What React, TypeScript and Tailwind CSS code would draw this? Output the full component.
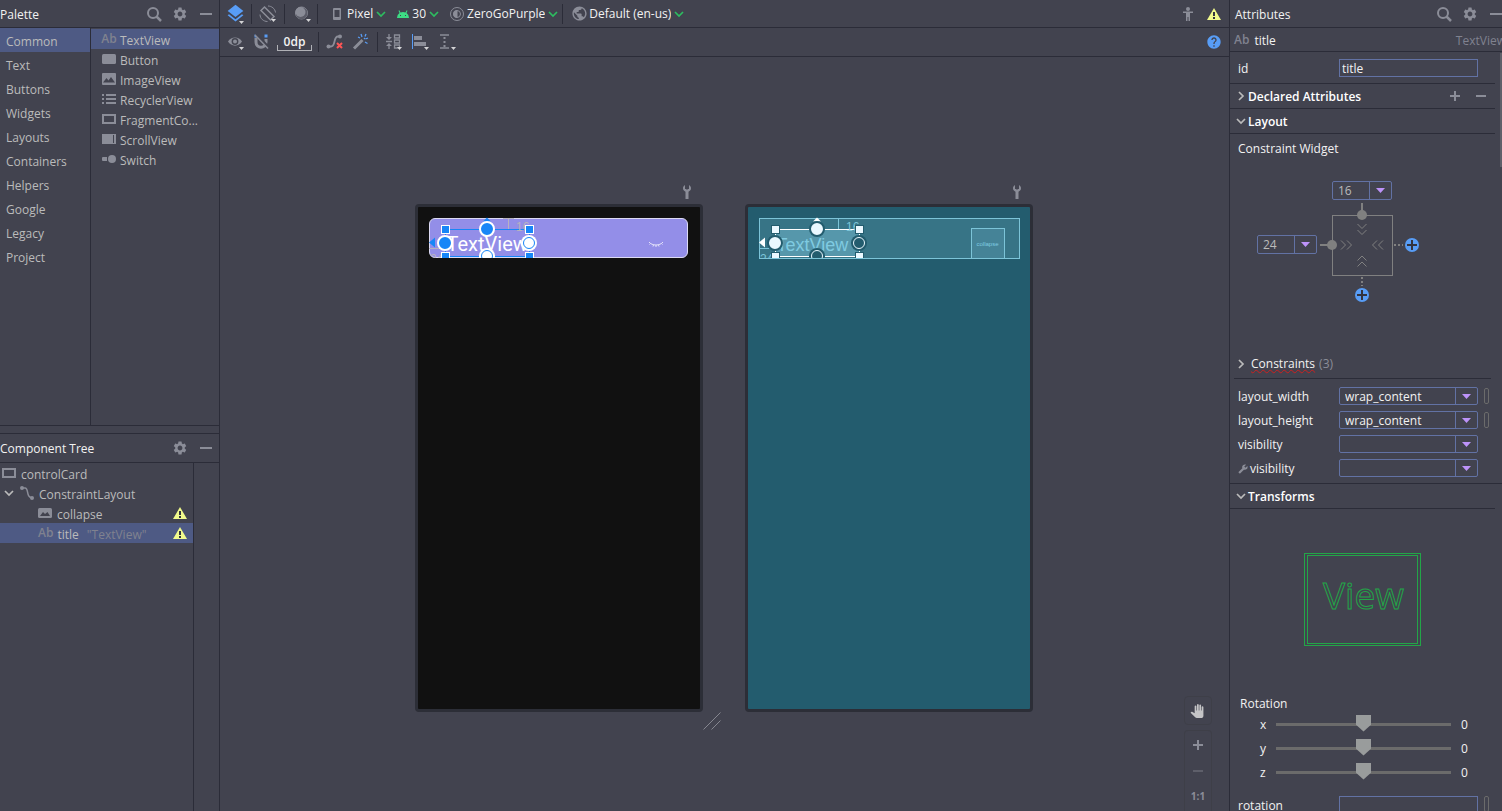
import type { ReactNode } from "react";
import clsx from "clsx";
import {
  MdBuild,
  MdHelp,
  MdLayers,
  MdPanTool,
  MdPublic,
  MdSettings,
} from "react-icons/md";

const categories = [
  "Common",
  "Text",
  "Buttons",
  "Widgets",
  "Layouts",
  "Containers",
  "Helpers",
  "Google",
  "Legacy",
  "Project",
];

const components = [
  { name: "TextView", icon: <AbIcon /> },
  { name: "Button", icon: <ButtonIcon /> },
  { name: "ImageView", icon: <ImageIcon /> },
  { name: "RecyclerView", icon: <ListIcon /> },
  { name: "FragmentCo...", icon: <FrameIcon /> },
  { name: "ScrollView", icon: <ScrollIcon /> },
  { name: "Switch", icon: <SwitchIcon /> },
];

/* ---------- icons ---------- */

function AbIcon() {
  return <span className="leading-4 font-semibold text-[#80828f]">Ab</span>;
}

function ButtonIcon() {
  return (
    <svg width="14" height="12" viewBox="0 0 14 12">
      <rect y="1" width="14" height="10" rx="1.5" fill="#8b8d98" />
    </svg>
  );
}

function ImageIcon() {
  return (
    <svg width="14" height="12" viewBox="0 0 14 12">
      <rect width="14" height="12" rx="1" fill="#8b8d98" />
      <path d="M1 9.5 4.5 5l2 2.5L9 4l4 5.500z" fill="#42434f" />
    </svg>
  );
}

function ListIcon() {
  return (
    <svg width="14" height="12" viewBox="0 0 14 12" fill="#8b8d98">
      <path d="M0 1h2v2H0zM4 1h10v2H4zM0 5h2v2H0zM4 5h10v2H4zM0 9h2v2H0zM4 9h10v2H4z" />
    </svg>
  );
}

function FrameIcon() {
  return (
    <svg width="14" height="12" viewBox="0 0 14 12" fill="none">
      <rect x="1" y="2" width="12" height="8" stroke="#8b8d98" strokeWidth="2" />
    </svg>
  );
}

function ScrollIcon() {
  return (
    <svg width="14" height="12" viewBox="0 0 14 12" fill="#8b8d98">
      <path d="M0 1h14v10H0z" />
      <path d="M11 2h2v8h-2z" fill="#42434f" />
      <path d="M12 2h1v8h-1z" />
    </svg>
  );
}

function SwitchIcon() {
  return (
    <svg width="14" height="12" viewBox="0 0 14 12" fill="#8b8d98">
      <path d="M1 4h4v4H1a1 1 0 0 1-1-1V5a1 1 0 0 1 1-1z" />
      <circle cx="10" cy="6" r="4" />
    </svg>
  );
}

function ConstraintIcon() {
  return (
    <svg width="14" height="14" viewBox="0 0 14 14" fill="none" stroke="#8b8d98">
      <path d="M2 2h3c4 0 1 9 6 9.500" strokeWidth="1.500" />
      <circle cx="2" cy="2" r="2" fill="#8b8d98" stroke="none" />
      <circle cx="12" cy="12" r="2" fill="#8b8d98" stroke="none" />
    </svg>
  );
}

function WarningIcon() {
  return (
    <svg width="14" height="12" viewBox="0 0 14 12">
      <path d="M7 0 14 12H0z" fill="#f1fa8c" />
      <path d="M6 4h2v4H6zM6 9h2v2H6z" fill="#33343f" />
    </svg>
  );
}

function SearchIcon() {
  return (
    <svg width="16" height="16" viewBox="0 0 16 16" fill="none" stroke="#8b8d98" strokeWidth="2">
      <circle cx="7" cy="7" r="5" />
      <path d="m10.500 10.500 4.500 4.500" strokeWidth="2.500" />
    </svg>
  );
}

function MinusIcon() {
  return (
    <svg width="12" height="12" viewBox="0 0 12 12">
      <path d="M0 5h12v2H0z" fill="#8b8d98" />
    </svg>
  );
}

function Chevron({ className, open = true }: { className?: string; open?: boolean }) {
  return (
    <svg
      width="10"
      height="10"
      viewBox="0 0 10 10"
      fill="none"
      stroke="currentColor"
      strokeWidth="1.700"
      className={clsx("shrink-0", className)}
    >
      <path d={open ? "M1 3l4 4 4-4" : "M3 1l4 4-4 4"} />
    </svg>
  );
}

function Wrench() {
  return (
    <svg width="8" height="14" viewBox="0 0 8 14">
      <path
        d="M2 0v4h1.200V4.500h1.600V4H6V0c1.300.800 2 2 2 3.300C8 5 7 6 5.500 6.800V14h-3V6.800C1 6 0 5 0 3.300 0 2 .7.800 2 0z"
        fill="#8b8d98"
      />
    </svg>
  );
}

// white corner mark on toolbar buttons that open a menu
const menuMark = <path d="M12 14h5l-2.500 3z" fill="#d4d4d6" />;

/* ---------- small parts ---------- */

function IconButton({ label, className, children }: { label: string; className?: string; children: ReactNode }) {
  return (
    <button type="button" aria-label={label} className={clsx("flex shrink-0 items-center justify-center", className)}>
      {children}
    </button>
  );
}

function ToolIcon({ label, children }: { label: string; children: ReactNode }) {
  return (
    <IconButton label={label} className="size-[18px]">
      <svg width="18" height="18" viewBox="0 0 18 18" fill="none">
        {children}
      </svg>
    </IconButton>
  );
}

function Divider() {
  return <span className="h-5 w-px shrink-0 bg-[#2b2c38]" />;
}

function ToolSelect({ label, value, icon }: { label: string; value: string; icon: ReactNode }) {
  return (
    <label className="flex items-center gap-[3px] text-[#f2f2f2]">
      {icon}
      <select aria-label={label} className="appearance-none field-sizing-content outline-none">
        <option>{value}</option>
      </select>
      <Chevron className="text-[#2dbd60]" />
    </label>
  );
}

function Combo({ id, label, value, className }: { id: string; label?: string; value: string; className?: string }) {
  return (
    <div className={clsx("flex rounded-xs border border-[#6272a4]", className)}>
      <select
        id={id}
        aria-label={label}
        className="min-w-0 flex-1 appearance-none pt-px pl-[5px] leading-4 outline-none"
      >
        <option>{value}</option>
      </select>
      <span className="pointer-events-none flex w-[22px] items-center justify-center border-l border-[#6272a4]">
        <svg width="9" height="5" viewBox="0 0 9 5">
          <path d="M0 0h9L4.500 5z" fill="#bd93f9" />
        </svg>
      </span>
    </div>
  );
}

function AttributeRow({ id, name, value, pill, tools }: { id: string; name: string; value: string; pill?: boolean; tools?: boolean }) {
  return (
    <div className="flex h-6 items-center">
      <label htmlFor={id} className="flex w-[101px] items-center gap-[2px] pt-[2px]">
        {tools && <MdBuild className="-scale-x-100 text-[#8b8d98]" size={10} />}
        {name}
      </label>
      <Combo id={id} value={value} className="h-[18px] w-[139px]" />
      {pill && <span className="ml-[6px] h-4 w-[5px] rounded-xs border border-[#6b6b6b]" />}
    </div>
  );
}

function PanelHeader({ title, search, className }: { title: string; search?: boolean; className?: string }) {
  return (
    <header className={clsx("flex shrink-0 items-center border-b border-[#2b2c38] text-[#f2f2f2]", className)}>
      <h2 className="flex-1 pt-[2px]">{title}</h2>
      {search && (
        <IconButton label={"Search " + title} className="mr-[10px]">
          <SearchIcon />
        </IconButton>
      )}
      <IconButton label={title + " settings"} className="mr-3">
        <MdSettings size={16} className="text-[#8b8d98]" />
      </IconButton>
      <IconButton label={"Hide " + title}>
        <MinusIcon />
      </IconButton>
    </header>
  );
}

/* ---------- left column ---------- */

function Palette() {
  return (
    <section className="flex h-[426px] shrink-0 flex-col border-b border-[#2b2c38]">
      <PanelHeader title="Palette" search className="h-7 pr-[7px]" />
      <div className="flex flex-1">
        <ul className="w-[91px] border-r border-[#2b2c38]">
          {categories.map((name, i) => (
            <li key={name}>
              <button
                type="button"
                className={clsx("flex h-6 w-full items-center pt-[3px] pl-[6px]", i === 0 && "bg-[#4e5a84]")}
              >
                {name}
              </button>
            </li>
          ))}
        </ul>
        <ul className="flex-1 pt-px">
          {components.map(({ name, icon }, i) => (
            <li
              key={name}
              className={clsx("flex h-5 items-center gap-1 pl-[11px]", i === 0 && "bg-[#4e5a84]")}
            >
              <span className="flex w-[14px] justify-center">{icon}</span>
              <span className="pt-[3px]">{name}</span>
            </li>
          ))}
        </ul>
      </div>
    </section>
  );
}

function ComponentTree() {
  return (
    <section className="mt-[7px] flex flex-1 flex-col border-t border-[#2b2c38]">
      <PanelHeader title="Component Tree" className="h-[29px] pr-[7px]" />
      <ul className="mr-[25px] flex-1 border-r border-[#2b2c38]">
        <li className="flex h-5 items-center gap-[5px] pl-[2px]">
          <FrameIcon />
          <span className="pt-[3px]">controlCard</span>
        </li>
        <li className="flex h-5 items-center pl-1">
          <Chevron />
          <span className="mr-[5px] ml-[6px]">
            <ConstraintIcon />
          </span>
          <span className="pt-[3px]">ConstraintLayout</span>
        </li>
        <li className="flex h-5 items-center pr-[6px] pl-[38px]">
          <svg width="14" height="10" viewBox="0 0 14 10">
            <rect width="14" height="10" rx="1.500" fill="#8b8d98" />
            <path d="M2 8l3-4 2 2 2.500-2L12 8z" fill="#42434f" />
          </svg>
          <span className="flex-1 pt-[3px] pl-[5px]">collapse</span>
          <WarningIcon />
        </li>
        <li className="flex h-5 items-center bg-[#4e5a84] pr-[6px] pl-[38px]">
          <AbIcon />
          <span className="pt-[3px] pl-1">title</span>
          <span className="flex-1 pt-[3px] pl-2 text-[#80828f]">"TextView"</span>
          <WarningIcon />
        </li>
      </ul>
    </section>
  );
}

/* ---------- toolbars ---------- */

function MainToolbar() {
  return (
    <div className="flex h-7 shrink-0 items-center border-b border-[#2b2c38] pr-2">
      <IconButton label="Design surface" className="relative w-[31px]">
        <MdLayers size={21} className="text-[#589df6]" />
        <svg width="5" height="3" viewBox="0 0 5 3" className="absolute right-[7px] bottom-0">
          <path d="M0 0h5L2.500 3z" fill="#d4d4d6" />
        </svg>
      </IconButton>
      <Divider />
      <div className="flex w-8 justify-center">
        <ToolIcon label="Orientation">
          <g stroke="#8b8d98">
            <path d="M5.500 2 15 11.500 11.500 15 2 5.500z" strokeWidth="1.500" />
            <path d="M9 1c3.500 0 7 2.500 7.500 6.500M8.500 16.500C4.500 16.500 1 13.500 1 9.500" />
          </g>
          {menuMark}
        </ToolIcon>
      </div>
      <Divider />
      <div className="flex w-8 justify-center pl-1">
        <ToolIcon label="Night mode">
          <circle cx="7.500" cy="8" r="6" stroke="#8b8d98" />
          <path d="M10 2.800a6 6 0 1 1-8 8A6 6 0 0 0 10 2.800z" fill="#5c5d69" />
          <circle cx="6.500" cy="7" r="5" fill="#8b8d98" />
          {menuMark}
        </ToolIcon>
      </div>
      <Divider />
      <div className="ml-[14px] flex items-center gap-[11px]">
        <ToolSelect
          label="Device"
          value="Pixel"
          icon={
            <svg width="10" height="12" viewBox="0 0 10 12" className="mr-[2px]">
              <path
                d="M2 0h6a1 1 0 0 1 1 1v10a1 1 0 0 1-1 1H2a1 1 0 0 1-1-1V1a1 1 0 0 1 1-1zm.5 2v7h5V2z"
                fill="#8b8d98"
                fillRule="evenodd"
              />
            </svg>
          }
        />
        <ToolSelect
          label="API level"
          value="30"
          icon={
            <svg width="12" height="8" viewBox="0 0 12 8">
              <path d="M0 8a6 6 0 0 1 2.500-5L1.500.8l.8-.5L3.500 2.500a6 6 0 0 1 5 0L9.700.3l.8.5L9.500 3A6 6 0 0 1 12 8z" fill="#3ddc84" />
              <path d="M3 5h1v1H3zM8 5h1v1H8z" fill="#42434f" />
            </svg>
          }
        />
        <ToolSelect
          label="Theme"
          value="ZeroGoPurple"
          icon={
            <svg width="14" height="14" viewBox="0 0 14 14" fill="none" stroke="#8b8d98">
              <circle cx="7" cy="7" r="6.500" />
              <circle cx="7" cy="7" r="3.500" />
              <path d="M7 3.500a3.500 3.500 0 0 0 0 7z" fill="#8b8d98" />
            </svg>
          }
        />
      </div>
      <span className="ml-1 flex">
        <Divider />
      </span>
      <div className="ml-2 flex flex-1">
        <ToolSelect label="Locale" value="Default (en-us)" icon={<MdPublic size={17} className="-mr-[2px] text-[#8b8d98]" />} />
      </div>
      <IconButton label="Accessibility" className="mr-[13px]">
        <svg width="12" height="14" viewBox="0 0 12 14" fill="#8b8d98">
          <circle cx="6" cy="2" r="2" />
          <path d="M1 4.500h10V6H8v8H6.500v-4h-1v4H4V6H1z" />
        </svg>
      </IconButton>
      <IconButton label="Warnings">
        <WarningIcon />
      </IconButton>
    </div>
  );
}

function LayoutToolbar() {
  return (
    <div className="flex h-[29px] shrink-0 items-center border-b border-[#2b2c38] pr-[7px] pl-[7px]">
      <div className="flex gap-2">
        <ToolIcon label="View options">
          <path d="M1 8.500C4 3 12 3 15 8.500 12 14 4 14 1 8.500z" fill="#8b8d98" />
          <circle cx="8" cy="8.500" r="3.400" fill="#42434f" />
          <circle cx="8" cy="8.500" r="2" fill="#8b8d98" />
          {menuMark}
        </ToolIcon>
        <ToolIcon label="Autoconnect">
          <path d="M3 5v4c0 7 10 7 10 0V6" stroke="#8b8d98" strokeWidth="3" />
          <path d="M1.500 3h3M11.500 3h3" stroke="#589df6" strokeWidth="3" />
          <path d="M3 1 16 15" stroke="#42434f" strokeWidth="3" />
          <path d="M2 2 15 15.500" stroke="#8b8d98" strokeWidth="1.500" />
        </ToolIcon>
      </div>
      <button type="button" className="relative mx-[6px] h-[17px] w-[35px] leading-4 font-semibold text-[#f2f2f2]">
        0dp
        <span className="absolute inset-x-0 bottom-0 h-[6px] border border-t-0 border-[#b0b1b6]" />
      </button>
      <Divider />
      <div className="mx-[7px] flex gap-2">
        <ToolIcon label="Clear constraints">
          <path d="M3 13.500h2c5 0 2-10 7-10h2" stroke="#8b8d98" strokeWidth="1.800" />
          <circle cx="2.500" cy="13.500" r="2" fill="#8b8d98" />
          <circle cx="14" cy="3.500" r="2" fill="#8b8d98" />
          <path d="m11 10 5 5M16 10l-5 5" stroke="#ff5555" strokeWidth="2" />
        </ToolIcon>
        <ToolIcon label="Infer constraints">
          <path d="M2 15.500 10.500 7" stroke="#8b8d98" strokeWidth="3" />
          <path d="M9 1l1 3M14 1l-1 2.500M12 5l1 1M16 5l-2.500 1M13 9l2.500 1.500M8 5 6 4" stroke="#589df6" strokeWidth="1.300" />
        </ToolIcon>
      </div>
      <Divider />
      <div className="ml-[7px] flex flex-1 gap-[9px]">
        <ToolIcon label="Pack">
          <path d="M9.500 2h5v3h-5zM9.500 7h5v3h-5zM9.500 12h5v3h-5z" stroke="#8b8d98" strokeWidth="1.300" />
          <path d="M1 8.500h6M4 1v4M4 12v4" stroke="#8b8d98" strokeWidth="1.300" />
          <path d="M1 4h6L4 7zM1 13h6l-3-3z" fill="#8b8d98" />
          {menuMark}
        </ToolIcon>
        <ToolIcon label="Align">
          <path d="M.5 1v15" stroke="#589df6" />
          <path d="M2 3h8v4H2zM2 9h12v4H2z" fill="#8b8d98" />
          {menuMark}
        </ToolIcon>
        <ToolIcon label="Guidelines">
          <path d="M1 2h9M1 15h9" stroke="#8b8d98" strokeWidth="1.600" />
          <path d="M5.500 4v10" stroke="#8b8d98" strokeWidth="2" strokeDasharray="2 2" />
          {menuMark}
        </ToolIcon>
      </div>
      <IconButton label="Help">
        <MdHelp size={16} className="text-[#589df6]" />
      </IconButton>
    </div>
  );
}

/* ---------- design surface ---------- */

// selection frame with its anchors; same geometry on both previews
function Selection({ line, fill, edge, hollow, ring, dim, margin }: {
  line: string;
  fill: string;
  edge: string;
  hollow: string;
  ring: string;
  dim: string;
  margin: string;
}) {
  return (
    <svg width="272" height="51" viewBox="0 0 272 51" className="absolute top-0 left-0" fill="none">
      <path d="M85 11.500h11M90.500 11v11M85 22.500h11M11 41.500h13" stroke={dim} />
      <path d="M27 22.500h84M27 49.500h84M27.500 23v26M111.500 23v26" stroke={line} />
      <g fill={margin} fontSize="12" fontFamily="Liberation Sans, sans-serif">
        <text x="98" y="24">16</text>
        <text x="12" y="56">24</text>
      </g>
      <path d="M11 35.500l6-5v10zM65 14.500l4-4 4 4z" fill={line} />
      <g fill={fill} stroke={edge}>
        <rect x="23.500" y="18.500" width="8" height="8" />
        <rect x="107.500" y="18.500" width="8" height="8" />
        <rect x="23.500" y="45.500" width="8" height="8" />
        <rect x="107.500" y="45.500" width="8" height="8" />
      </g>
      <g fill={fill} stroke={edge} strokeWidth="2">
        <circle cx="69" cy="22" r="7" />
        <circle cx="27" cy="36" r="7" />
      </g>
      <g fill={hollow}>
        <circle cx="111" cy="36" r="8" />
        <circle cx="69" cy="49" r="8" />
      </g>
      <g stroke={ring}>
        <circle cx="111" cy="36" r="5.500" />
        <circle cx="69" cy="49" r="5.500" />
      </g>
    </svg>
  );
}

function DesignPreview() {
  return (
    <div className="relative h-[508px] w-[288px] rounded-sm border-[3px] border-[#2c2e37] bg-[#111111]">
      <div className="absolute top-[11px] left-[11px] h-10 w-[259px] rounded-md border border-[#dcdaf3] bg-[#938ee8]" />
      <span className="absolute top-[25px] left-[29px] font-[Roboto] text-xl leading-6 text-white">TextView</span>
      <svg width="16" height="6" viewBox="0 0 16 6" className="absolute top-[34px] left-[230px]" fill="none" stroke="#e6e4fa">
        <path d="M1 1c3 4 11 4 14 0M1.500 3.500l1-1M5 5.500l.5-1.500M8 6V4M11 5.500 10.500 4M14.500 3.500l-1-1" />
      </svg>
      <Selection
        line="#1886f7"
        fill="#1886f7"
        edge="#ffffff"
        hollow="#ffffff"
        ring="#1886f7"
        dim="#b7b3bf"
        margin="#b7b3bf"
      />
      <svg width="18" height="18" viewBox="0 0 18 18" className="absolute -right-[21px] -bottom-[21px]" stroke="#85868f">
        <path d="M.5 17.500l17-17M8.500 17.500l9-9" />
      </svg>
    </div>
  );
}

function BlueprintPreview() {
  return (
    <div className="relative h-[508px] w-[288px] rounded-sm border-[3px] border-[#2c2e37] bg-[#235c6e]">
      <div className="absolute top-[11px] left-[11px] h-[41px] w-[261px] border border-[#7cc4d8] bg-[#377486]" />
      <div className="absolute top-[22px] left-[28px] h-7 w-[83px] bg-[#5697ab]" />
      <span className="absolute top-[26px] left-[29px] font-['Liberation_Sans'] text-lg leading-6 text-[#7fcbe1]">
        TextView
      </span>
      <div className="absolute top-[21px] left-[223px] flex h-[31px] w-[34px] items-center justify-center border border-[#7cc4d8] bg-[#458397] font-['Liberation_Sans'] text-[6px] text-[#7fcbe1]">
        collapse
      </div>
      <Selection
        line="#ffffff"
        fill="#eaf8ff"
        edge="#235c6e"
        hollow="#235c6e"
        ring="#eaf8ff"
        dim="#7cc4d8"
        margin="#7cc4d8"
      />
    </div>
  );
}

function Canvas() {
  return (
    <main className="relative flex flex-1 justify-center gap-[42px] overflow-hidden pt-32 pr-[2px]">
      {[<DesignPreview key="design" />, <BlueprintPreview key="blueprint" />].map((preview) => (
        <div key={preview.key} className="flex flex-col gap-[5px]">
          <div className="flex justify-end pr-3">
            <Wrench />
          </div>
          {preview}
        </div>
      ))}
      <div className="absolute right-[17px] bottom-0 flex flex-col gap-[5px] text-[#8b8d98]">
        <IconButton label="Pan" className="h-[29px] w-7 rounded-sm border border-[#3e3f48] pr-[2px] text-[#c4c4c6]">
          <MdPanTool size={14} />
        </IconButton>
        <div className="flex h-[81px] flex-col items-center rounded-t-sm border border-b-0 border-[#3e3f48] pt-[1px]">
          <IconButton label="Zoom in" className="h-[26px]">
            <svg width="10" height="10" viewBox="0 0 10 10">
              <path d="M4 0h2v4h4v2H6v4H4V6H0V4h4z" fill="#8b8d98" />
            </svg>
          </IconButton>
          <IconButton label="Zoom out" className="h-[26px]">
            <svg width="10" height="10" viewBox="0 0 10 10">
              <path d="M0 4h10v2H0z" fill="#5e5f6a" />
            </svg>
          </IconButton>
          <button type="button" className="h-[26px] w-[26px] text-[10px] font-bold">
            1:1
          </button>
        </div>
      </div>
    </main>
  );
}

/* ---------- attributes ---------- */

function ConstraintWidget() {
  return (
    <div className="relative h-[220px] shrink-0 pt-[7px] pl-2">
      <h4 className="leading-4">Constraint Widget</h4>
      <Combo id="margin-top" label="Top margin" value="16" className="absolute top-[47px] left-[102px] h-[19px] w-[60px] text-[#bbbbbb]" />
      <Combo id="margin-start" label="Start margin" value="24" className="absolute top-[101px] left-[27px] h-[19px] w-[60px] text-[#bbbbbb]" />
      <svg width="102" height="102" viewBox="0 0 102 102" className="absolute top-[68px] left-[89px]" fill="none" stroke="#808080">
        <rect x="13.500" y="13.500" width="60" height="60" />
        <path d="M43 1v12M1 43h12" strokeWidth="2" />
        <path d="M43 75v9M75 43h9" strokeWidth="2" strokeDasharray="2 2" />
        <circle cx="43" cy="13" r="5" fill="#808080" stroke="none" />
        <circle cx="13" cy="43" r="5" fill="#808080" stroke="none" />
        <path d="M38.500 22l4.500 4.500 4.500-4.500M38.500 28l4.500 4.500 4.500-4.500M38.500 58.500l4.500-4.500 4.500 4.500M38.500 64.500l4.500-4.500 4.500 4.500M22 38.500l4.500 4.500-4.500 4.500M28 38.500l4.500 4.500-4.500 4.500M58 38.500l-4.500 4.500 4.500 4.500M64 38.500l-4.500 4.500 4.500 4.500" />
        <circle cx="43" cy="93" r="7" fill="#589df6" stroke="none" />
        <circle cx="93" cy="43" r="7" fill="#589df6" stroke="none" />
        <path d="M38 93h10M43 88v10M88 43h10M93 38v10" stroke="#33343f" strokeWidth="2" />
      </svg>
    </div>
  );
}

function RotationSlider({ axis }: { axis: string }) {
  return (
    <div className="flex h-6 shrink-0 items-center">
      <label htmlFor={"rotation-" + axis} className="w-[46px] pt-[2px] pl-[30px]">
        {axis}
      </label>
      <input
        id={"rotation-" + axis}
        type="range"
        min={-360}
        max={360}
        defaultValue={0}
        className="h-[18px] w-[175px] appearance-none bg-transparent [&::-webkit-slider-runnable-track]:h-[3px] [&::-webkit-slider-runnable-track]:bg-[#6b6b6b] [&::-webkit-slider-thumb]:-mt-2 [&::-webkit-slider-thumb]:h-[17px] [&::-webkit-slider-thumb]:w-[15px] [&::-webkit-slider-thumb]:appearance-none [&::-webkit-slider-thumb]:bg-[#999c9c] [&::-webkit-slider-thumb]:[clip-path:polygon(0_0,100%_0,100%_60%,50%_100%,0_60%)]"
      />
      <output htmlFor={"rotation-" + axis} className="pt-[2px] pl-[10px]">
        0
      </output>
    </div>
  );
}

function SectionTitle({ title, open = true, children }: { title: string; open?: boolean; children?: ReactNode }) {
  return (
    <div className="mr-[7px] flex h-[25px] shrink-0 items-center border-b border-[#2b2c38] pl-[6px]">
      <Chevron open={open} className="text-[#bbbbbb]" />
      <h3 className="flex-1 pt-[2px] pl-[2px] font-semibold text-white">{title}</h3>
      {children}
    </div>
  );
}

function Attributes() {
  return (
    <aside className="relative flex w-[273px] shrink-0 flex-col overflow-hidden border-l border-[#2b2c38] text-[#f2f2f2]">
      <PanelHeader title="Attributes" search className="h-7 pl-[5px]" />
      <div className="flex h-6 shrink-0 items-center border-b border-[#2b2c38] pl-1">
        <AbIcon />
        <span className="flex-1 pt-[2px] pl-[5px]">title</span>
        <span className="-mr-1 pt-[2px] text-[#80828f]">TextView</span>
      </div>
      <div className="mr-[7px] flex h-8 shrink-0 items-center border-b border-[#2b2c38] pl-2">
        <label htmlFor="view-id" className="w-[101px] pt-[2px]">
          id
        </label>
        <input
          id="view-id"
          defaultValue="title"
          className="h-[18px] w-[139px] border border-[#6272a4] pt-px pl-[2px] outline-none"
        />
      </div>
      <SectionTitle title="Declared Attributes" open={false}>
        <IconButton label="Add attribute" className="mr-4">
          <svg width="10" height="10" viewBox="0 0 10 10">
            <path d="M4 0h2v4h4v2H6v4H4V6H0V4h4z" fill="#8b8d98" />
          </svg>
        </IconButton>
        <IconButton label="Remove attribute" className="mr-[9px]">
          <svg width="10" height="10" viewBox="0 0 10 10">
            <path d="M0 4h10v2H0z" fill="#8b8d98" />
          </svg>
        </IconButton>
      </SectionTitle>
      <SectionTitle title="Layout" />
      <ConstraintWidget />
      <div className="mr-[11px] ml-1 flex h-[25px] shrink-0 items-center border-b border-[#2b2c38] pb-1">
        <Chevron open={false} className="mr-[5px] ml-[2px] text-[#bbbbbb]" />
        <span className="underline decoration-[#cc1f1f] decoration-wavy decoration-1">Constraints</span>
        <span className="pl-1 text-[#8b8d98]">(3)</span>
      </div>
      <div className="shrink-0 border-b border-[#2b2c38] pt-[5px] pb-[3px] pl-2">
        <AttributeRow id="layout-width" name="layout_width" value="wrap_content" pill />
        <AttributeRow id="layout-height" name="layout_height" value="wrap_content" pill />
        <AttributeRow id="visibility" name="visibility" value="" />
        <AttributeRow id="tools-visibility" name="visibility" value="" tools />
      </div>
      <SectionTitle title="Transforms" />
      <div className="flex shrink-0 justify-center pt-11 pb-[50px] pr-2">
        <svg width="117" height="93" viewBox="0 0 117 93" fill="none" stroke="#23a548">
          <rect x=".5" y=".5" width="116" height="92" />
          <rect x="3.500" y="2.500" width="110" height="88" />
          <text x="19" y="56" fontSize="37" fontFamily="Open Sans, sans-serif">
            View
          </text>
        </svg>
      </div>
      <h4 className="shrink-0 pl-[10px] leading-4">Rotation</h4>
      <RotationSlider axis="x" />
      <RotationSlider axis="y" />
      <RotationSlider axis="z" />
      <div className="flex shrink-0 items-start pt-3 pl-2">
        <label htmlFor="rotation" className="w-[101px] pt-[2px]">
          rotation
        </label>
        <input id="rotation" className="h-[18px] w-[139px] border border-[#6272a4] pl-[2px] outline-none" />
        <span className="ml-[6px] h-4 w-[5px] rounded-xs border border-[#6b6b6b]" />
      </div>
      <span className="absolute top-[53px] right-0 h-[114px] w-[2px] bg-[#5e5f69]" />
    </aside>
  );
}

export default function App() {
  return (
    <div className="flex h-screen overflow-hidden bg-[#42434f] font-['Open_Sans',sans-serif] text-xs text-[#bbbbbb]">
      <aside className="flex w-[220px] shrink-0 flex-col border-r border-[#2b2c38]">
        <Palette />
        <ComponentTree />
      </aside>
      <div className="flex min-w-0 flex-1 flex-col">
        <MainToolbar />
        <LayoutToolbar />
        <Canvas />
      </div>
      <Attributes />
    </div>
  );
}
